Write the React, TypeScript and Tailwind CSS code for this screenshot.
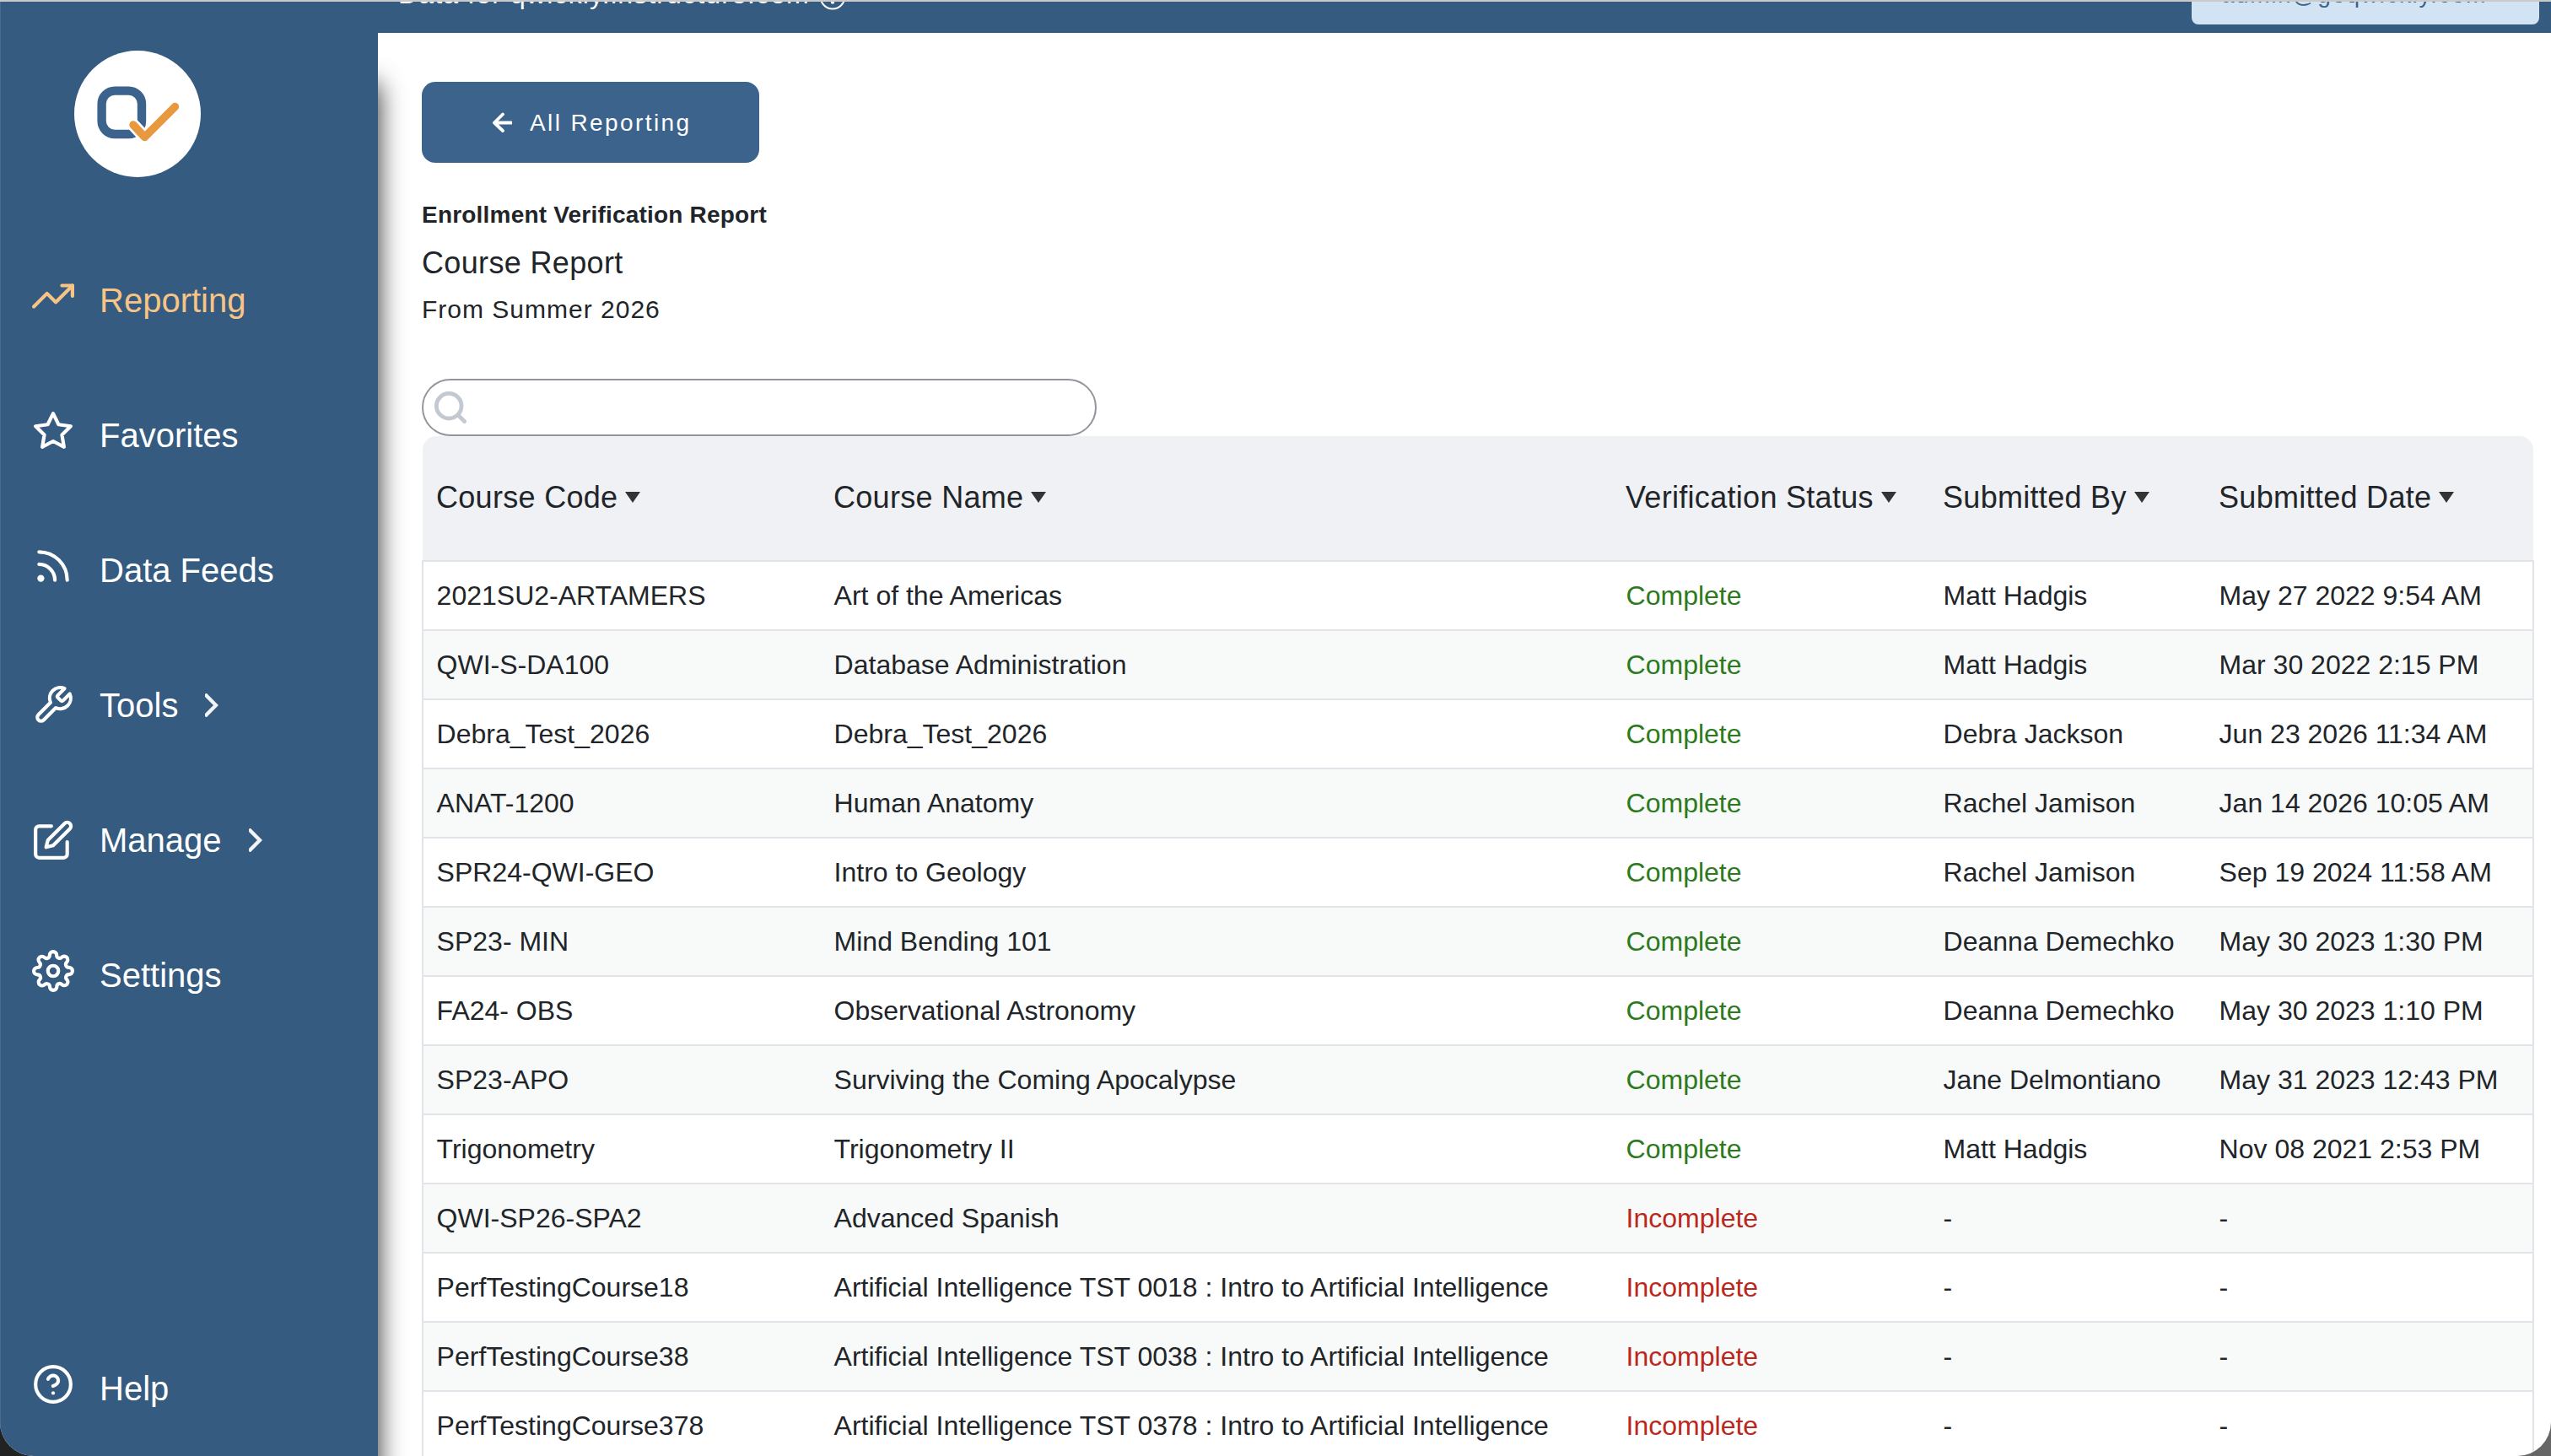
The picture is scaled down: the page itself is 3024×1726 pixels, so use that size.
import { FiTrendingUp, FiStar, FiRss, FiTool, FiEdit, FiSettings, FiHelpCircle } from 'react-icons/fi'

const menu = [
  { nombre: 'Reporting', Icono: FiTrendingUp, activo: true },
  { nombre: 'Favorites', Icono: FiStar },
  { nombre: 'Data Feeds', Icono: FiRss },
  { nombre: 'Tools', Icono: FiTool, flecha: true },
  { nombre: 'Manage', Icono: FiEdit, flecha: true },
  { nombre: 'Settings', Icono: FiSettings },
]

const columns = ['Course Code', 'Course Name', 'Verification Status', 'Submitted By', 'Submitted Date']

const rows = [
  ['2021SU2-ARTAMERS', 'Art of the Americas', 'Complete', 'Matt Hadgis', 'May 27 2022 9:54 AM'],
  ['QWI-S-DA100', 'Database Administration', 'Complete', 'Matt Hadgis', 'Mar 30 2022 2:15 PM'],
  ['Debra_Test_2026', 'Debra_Test_2026', 'Complete', 'Debra Jackson', 'Jun 23 2026 11:34 AM'],
  ['ANAT-1200', 'Human Anatomy', 'Complete', 'Rachel Jamison', 'Jan 14 2026 10:05 AM'],
  ['SPR24-QWI-GEO', 'Intro to Geology', 'Complete', 'Rachel Jamison', 'Sep 19 2024 11:58 AM'],
  ['SP23- MIN', 'Mind Bending 101', 'Complete', 'Deanna Demechko', 'May 30 2023 1:30 PM'],
  ['FA24- OBS', 'Observational Astronomy', 'Complete', 'Deanna Demechko', 'May 30 2023 1:10 PM'],
  ['SP23-APO', 'Surviving the Coming Apocalypse', 'Complete', 'Jane Delmontiano', 'May 31 2023 12:43 PM'],
  ['Trigonometry', 'Trigonometry II', 'Complete', 'Matt Hadgis', 'Nov 08 2021 2:53 PM'],
  ['QWI-SP26-SPA2', 'Advanced Spanish', 'Incomplete', '-', '-'],
  ['PerfTestingCourse18', 'Artificial Intelligence TST 0018 : Intro to Artificial Intelligence', 'Incomplete', '-', '-'],
  ['PerfTestingCourse38', 'Artificial Intelligence TST 0038 : Intro to Artificial Intelligence', 'Incomplete', '-', '-'],
  ['PerfTestingCourse378', 'Artificial Intelligence TST 0378 : Intro to Artificial Intelligence', 'Incomplete', '-', '-'],
]

const grid = 'grid grid-cols-[471px_939px_376px_327px_1fr]'

function Logo() {
  return (
    <svg className="ml-[88px] mt-[58px] block size-[150px] shrink-0" viewBox="88 60 150 150">
      <circle cx="163" cy="135" r="75" fill="#fff" />
      <rect x="120.6" y="107.6" width="47.4" height="51.4" rx="15.5" fill="none" stroke="#3b638c" strokeWidth="10.4" />
      <path d="M158 148L171.5 162.5L207 126.5" fill="none" stroke="#fff" strokeWidth="15" strokeLinecap="round" />
      <path d="M158 148L171.5 162.5L207.5 126.5" fill="none" stroke="#e8983e" strokeWidth="9.4" strokeLinecap="round" strokeLinejoin="round" />
    </svg>
  )
}

function Sidebar() {
  return (
    <aside className="relative z-10 flex w-[448px] shrink-0 flex-col border-l border-[#4a6b8e] bg-[#355b81] text-[40px] leading-[46px] text-white">
      <div className="-ml-px flex flex-1 flex-col">
        <Logo />
        <nav className="mt-[116px] flex flex-col gap-[110px] pl-[38px]">
          {menu.map(({ nombre, Icono, activo, flecha }) => (
            <a key={nombre} className={activo ? 'flex h-[50px] text-[#f8c486]' : 'flex h-[50px]'}>
              <Icono className={flecha ? 'mt-[5px] size-[50px] shrink-0' : 'size-[50px] shrink-0'} />
              <span className="ml-[30px] mt-[7px]">{nombre}</span>
              {flecha && (
                <svg className="ml-8 mt-4 h-7 w-4" viewBox="0 0 16 28" fill="none" stroke="#f2f4f7" strokeWidth="4.4">
                  <path d="M0 1L13 14L0 27" />
                </svg>
              )}
            </a>
          ))}
        </nav>
        <a className="mt-auto mb-[60px] flex h-[50px] pl-[38px]">
          <FiHelpCircle className="size-[50px]" />
          <span className="ml-[30px] mt-[7px]">Help</span>
        </a>
      </div>
    </aside>
  )
}

function TopBar() {
  return (
    <header className="relative z-20 flex h-[37px] shrink-0 items-end justify-between overflow-hidden bg-[#355b81] pl-[24px] pr-[14px]">
      <div className="mb-[27px] flex items-end text-[32px] leading-[37px] tracking-[1.15px] text-white">
        Data for qwickly.instructure.com
        <svg className="ml-[11px] size-[32px]" viewBox="0 0 32 32" fill="none" stroke="#fff" strokeWidth="2">
          <circle cx="16" cy="16" r="14.4" />
          <path d="M16 13V20" strokeWidth="3" />
          <circle cx="16" cy="22.5" r="1.2" fill="#fff" />
        </svg>
      </div>
      <div className="mb-[10px] flex h-[70px] w-[412px] items-end justify-end rounded-lg bg-[#d2e3f3] pb-[19px] pr-[62px] text-[28px] leading-[32px] tracking-[1.6px] text-[#3b638c]">
        admin@goqwickly.com
      </div>
    </header>
  )
}

function SearchBox() {
  return (
    <div className="mt-[65px] flex h-[68px] w-[800px] items-center rounded-full border-2 border-[#92959c] pl-[13px]">
      <svg className="size-[38px]" viewBox="0 0 38 38" fill="none" stroke="#c3c9d0" strokeWidth="4.8">
        <circle cx="17.2" cy="17.2" r="14.8" />
        <path d="M28 28L35.5 35.5" strokeLinecap="round" />
      </svg>
    </div>
  )
}

function CourseTable() {
  return (
    <div className="w-[2504px]">
      <div className={`${grid} mx-px h-[147px] items-center rounded-t-2xl bg-[#f0f1f4] pb-[2px] pl-[16px] text-[36px] tracking-[0.3px]`}>
        {columns.map((c) => (
          <div key={c} className="flex items-center whitespace-nowrap">
            {c}
            <svg className="ml-[9px] h-[13px] w-[18px]" viewBox="0 0 18 13">
              <path d="M0 0H18L9 13Z" fill="#333" />
            </svg>
          </div>
        ))}
      </div>
      <div className="border-x-2 border-t-2 border-[#e2e4e9]">
        {rows.map(([code, name, status, by, date]) => (
          <div key={code} className={`${grid} h-[82px] items-center whitespace-nowrap border-b-2 border-[#e2e4e9] pl-[15.6px] text-[32px] even:bg-[#f8faf9]`}>
            <div>{code}</div>
            <div>{name}</div>
            <div className={status === 'Complete' ? 'text-[#2c7a1c]' : 'text-[#bb271a]'}>{status}</div>
            <div>{by}</div>
            <div>{date}</div>
          </div>
        ))}
      </div>
    </div>
  )
}

export default function App() {
  return (
    <div className="h-[1726px] w-[3024px] overflow-hidden bg-linear-to-r from-[#222] to-[#666] font-['Liberation_Sans',Arial,sans-serif] text-[#212529]">
      <div className="flex h-full overflow-hidden rounded-b-[40px] border-t-2 border-[#cacaca] bg-white">
        <Sidebar />
        <div className="flex min-w-0 flex-1 flex-col">
          <TopBar />
          <main className="relative min-h-0 flex-1 overflow-hidden pl-[52px] pt-[58px]">
            <div className="absolute -left-10 top-[61px] h-[1800px] w-10 shadow-[0_0_30px_1px_rgba(0,0,0,0.8)]" />
            <button className="flex h-[96px] w-[400px] items-center rounded-2xl bg-[#3b638c] pl-[83px] text-[28px] tracking-[2.4px] text-white">
              <svg className="mr-[21px] size-6" viewBox="0 0 24 24" fill="none" stroke="#fff" strokeWidth="3.8" strokeLinecap="round" strokeLinejoin="round">
                <path d="M13 2.5L3 12.5L13 22M3 12.5H23" />
              </svg>
              <span className="pt-px">All Reporting</span>
            </button>
            <h1 className="mt-[46px] text-[28px] font-bold leading-[32px] tracking-[0.2px]">Enrollment Verification Report</h1>
            <h2 className="mt-[20px] text-[36px] leading-[42px] tracking-[0.35px]">Course Report</h2>
            <p className="mt-[17px] text-[30px] leading-[34px] tracking-[1px]">From Summer 2026</p>
            <SearchBox />
            <CourseTable />
          </main>
        </div>
      </div>
    </div>
  )
}
